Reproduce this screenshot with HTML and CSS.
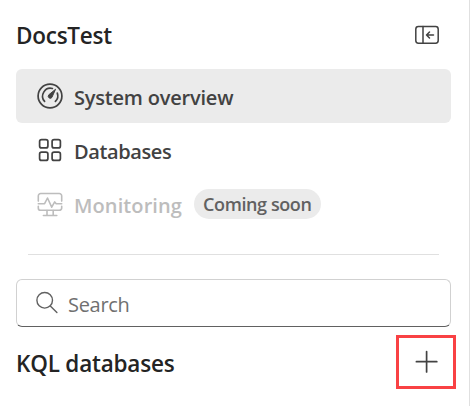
FILE: index.html
```html
<!DOCTYPE html>
<html lang="en">
<head>
<meta charset="utf-8">
<title>DocsTest</title>
<link rel="stylesheet" href="styles.css">
</head>
<body>
<aside class="panel">
  <header class="header">
    <h1 class="title"><span class="t-docs">DocsTest</span></h1>
    <svg class="collapse" width="26" height="20" viewBox="0 0 26 20" fill="none" stroke="#424242" stroke-width="1.5" stroke-linecap="round" stroke-linejoin="round">
      <rect x="1.8" y="1.6" width="22.4" height="16.6" rx="2.6"/>
      <path d="M9 1.6v16.6M19.5 10h-7M15.5 7l-3 3 3 3"/>
    </svg>
  </header>
  <nav class="nav">
    <a class="item active">
      <svg class="icon" width="28" height="28" viewBox="0 0 28 28" fill="none" stroke="#424242" stroke-width="1.7" stroke-linecap="round">
        <circle cx="14" cy="14" r="11.9"/>
        <path d="M8.6 19.4A7.9 7.9 0 0 1 16.4 6.5M21.3 11.1a7.9 7.9 0 0 1-1.9 8.3"/>
        <path d="M19.4 7.6L15.9 15.4a2 2 0 0 1-3.3-2.3Z" fill="#424242" stroke-width="1" stroke-linejoin="round"/>
      </svg>
      <span class="label t-system">System overview</span>
    </a>
    <a class="item">
      <svg class="icon" width="28" height="28" viewBox="0 0 28 28" fill="none" stroke="#424242" stroke-width="1.7">
        <rect x="3.6" y="3.6" width="8.3" height="8.3" rx="2"/>
        <rect x="16.1" y="3.6" width="8.3" height="8.3" rx="2"/>
        <rect x="3.6" y="16.1" width="8.3" height="8.3" rx="2"/>
        <rect x="16.1" y="16.1" width="8.3" height="8.3" rx="2"/>
      </svg>
      <span class="label t-databases">Databases</span>
    </a>
    <a class="item disabled">
      <svg class="icon" width="28" height="28" viewBox="0 -.5 28 28" fill="none" stroke="#bdbdbd" stroke-width="1.6" stroke-linecap="round" stroke-linejoin="round">
        <path d="M2.3 10.6V5.4a2.4 2.4 0 0 1 2.4-2.4h18.6a2.4 2.4 0 0 1 2.4 2.4v5.2M2.3 15.8v1.6a2.4 2.4 0 0 0 2.4 2.4h18.6a2.4 2.4 0 0 0 2.4-2.4v-1.6"/>
        <path d="M2.3 13.2h6.3l2.9-5.7 4.2 9.2 3-5.3 1.5 1.8h5.5M11 20v4.8M17.2 20v4.8M7.4 25h13.4"/>
      </svg>
      <span class="label t-monitoring">Monitoring</span>
      <span class="badge"><span class="t-soon">Coming soon</span></span>
    </a>
  </nav>
  <hr class="divider">
  <div class="search">
    <svg width="24" height="24" viewBox="0 0 24 24" fill="none" stroke="#616161" stroke-width="1.4" stroke-linecap="round">
      <circle cx="9.7" cy="9.3" r="7.8"/>
      <path d="M15.3 14.9l6.6 6.6"/>
    </svg>
    <span class="t-search">Search</span>
  </div>
  <div class="section">
    <h2 class="title"><span class="t-kql">KQL databases</span></h2>
    <button class="add" aria-label="Add">
      <svg width="24" height="24" viewBox="0 0 24 24" stroke="#424242" stroke-width="1.7" stroke-linecap="round">
        <path d="M12.6 1.5v20.4M2.4 11.7h20.4"/>
      </svg>
    </button>
  </div>
</aside>
</body>
</html>
```
FILE: styles.css
```css
* { box-sizing: border-box; }
body {
  margin: 0;
  background: #fff;
  font-family: "Open Sans", "Noto Sans", sans-serif;
  color: #424242;
}
.panel {
  width: 470px;
  height: 406px;
  padding: 0 18px 0 16px;
  border-right: 1px solid #e0e0e0;
  overflow: hidden;
}
.header {
  display: flex;
  align-items: center;
  justify-content: space-between;
  height: 69px;
  padding-right: 11px;
}
.title {
  margin: 0;
  padding-top: 3px;
  font-size: 22.5px;
  line-height: 30px;
  font-weight: 600;
  color: #242424;
  white-space: nowrap;
}
.nav { display: flex; flex-direction: column; }
.item {
  display: flex;
  align-items: center;
  height: 54px;
  padding-left: 20px;
  border-radius: 6px;
  font-size: 20px;
  line-height: 28px;
  font-weight: 600;
  white-space: nowrap;
}
.active { background: #ebebeb; }
.icon { flex: none; margin-right: 10px; }
.label { padding-top: 3px; }
.disabled { color: #bdbdbd; }
.badge {
  height: 30px;
  margin-left: 12px;
  width: 127px;
  padding-left: 9px;
  border-radius: 15px;
  background: #ebebeb;
  color: #616161;
  font-size: 18px;
  line-height: 30px;
}
.divider {
  height: 1px;
  margin: 23px 12px 24px;
  border: 0;
  background: #e0e0e0;
}
.search {
  display: flex;
  align-items: center;
  gap: 9px;
  height: 48px;
  padding-left: 18px;
  border: 1px solid #d1d1d1;
  border-bottom-color: #616161;
  border-radius: 6px;
  color: #707070;
  font-size: 20px;
}
.section {
  display: flex;
  align-items: center;
  justify-content: space-between;
  height: 54px;
  margin: 8px -5px 0 0;
}
.add {
  display: flex;
  align-items: center;
  justify-content: center;
  width: 60px;
  height: 54px;
  padding: 0;
  border: 3px solid #f94144;
  background: #fff;
}
.t-docs { letter-spacing: -0.25px; }
.t-system { letter-spacing: -0.2px; }
.t-databases { letter-spacing: -0.4px; }
.t-monitoring { letter-spacing: 0.1px; }
.t-soon { letter-spacing: -0.4px; }
.t-search { padding-top: 2px; letter-spacing: -0.3px; }
.t-kql { letter-spacing: -0.2px; }
```
